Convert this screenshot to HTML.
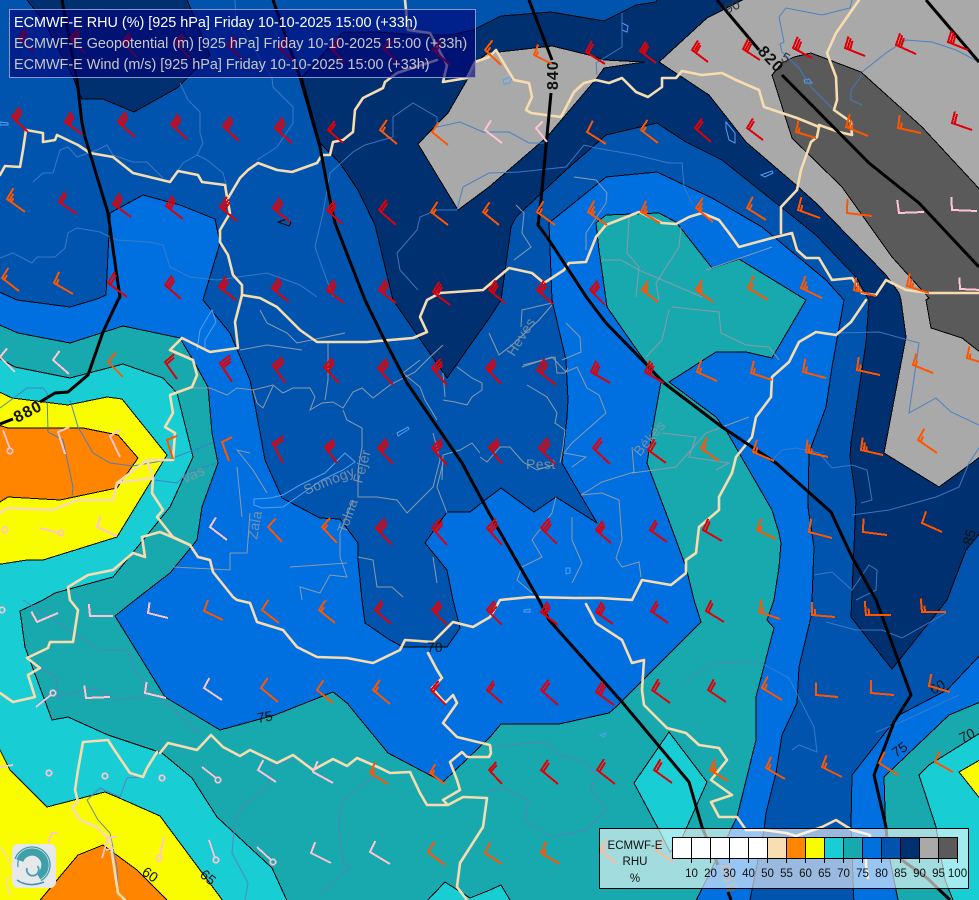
<!DOCTYPE html>
<html><head><meta charset="utf-8"><title>ECMWF-E RHU</title>
<style>html,body{margin:0;padding:0;background:#006fe0}svg{display:block}text{font-family:"Liberation Sans",sans-serif}</style></head>
<body>
<svg xmlns="http://www.w3.org/2000/svg" width="979" height="900" viewBox="0 0 979 900">
<defs>
<g id="r3" fill="none" stroke="#e00008" stroke-width="2"><path vector-effect="non-scaling-stroke" d="M0 0L-1 0L-1.05-.56M-.87 0L-.92-.52M-.75 0L-.8-.44"/></g>
<g id="r2" fill="none" stroke="#e00008" stroke-width="2"><path vector-effect="non-scaling-stroke" d="M0 0L-1 0L-1.05-.56M-.87 0L-.92-.48"/></g>
<g id="o3" fill="none" stroke="#ff5500" stroke-width="2"><path vector-effect="non-scaling-stroke" d="M0 0L-1 0L-1.05-.56M-.87 0L-.91-.36M-.76 0L-.79-.2"/></g>
<g id="o2" fill="none" stroke="#ff5500" stroke-width="2"><path vector-effect="non-scaling-stroke" d="M0 0L-1 0L-1.05-.56M-.87 0L-.9-.26"/></g>
<g id="o1" fill="none" stroke="#ff5500" stroke-width="2"><path vector-effect="non-scaling-stroke" d="M0 0L-1 0L-1.05-.56"/></g>
<g id="p1" fill="none" stroke="#ffc4d4" stroke-width="2"><path vector-effect="non-scaling-stroke" d="M0 0L-1 0L-1.05-.52"/></g>
</defs>

<!-- colour fields -->
<rect x="0" y="0" width="979" height="900" fill="#006fe0"/>
<g stroke="#000" stroke-width="1" stroke-linejoin="round" shape-rendering="crispEdges">
<polygon fill="#0054ad" points="-5,-5 985,-5 985,650 947,690 899,715 852,775 851,826 854,905 749,905 764,830 766,813 776,773 782,735 797,703 799,667 811,617 812,600 814,547 808,507 809,453 826,407 832,367 844,300 826,280 762,227 712,198 657,172 606,177 549,223 552,300 566,360 568,400 567,417 562,463 570,477 597,523 556,497 534,512 501,488 489,497 470,512 447,512 425,543 447,570 453,600 460,628 447,647 403,647 390,640 365,623 362,600 358,560 358,543 340,519 320,518 282,498 265,460 255,405 250,380 230,333 203,300 220,243 215,219 180,205 143,195 110,213 106,295 97,299 70,307 17,300 -5,290"/>
<polygon fill="#003070" points="23,-5 43,20 73,77 80,95 82,99 103,99 134,112 177,88 210,55 185,-5"/>
<polygon fill="#003070" points="302,77 343,32 377,32 417,35 450,35 473,30 489,22 501,16 551,12 604,21 636,5 656,2 660,-5 985,-5 985,527 966,550 947,600 892,669 851,617 856,500 850,457 851,443 866,343 869,300 856,277 816,235 776,203 722,160 686,142 657,123 606,135 566,170 516,217 511,227 501,300 490,317 447,378 393,300 375,225 358,190 340,163 320,143"/>
<polygon fill="#a9a9a9" points="752,-5 985,-5 985,453 972,463 939,487 884,453 906,337 901,300 899,293 886,275 816,203 796,185 746,142 709,95 659,62 707,18"/>
<polygon fill="#a9a9a9" points="552,46 589,55 604,60 644,62 604,68 597,78 547,137 489,187 458,210 418,144 448,113 467,80 475,63 489,52 499,52"/>
<polygon fill="#5a5a5a" points="772,75 782,63 794,57 811,53 861,72 922,127 985,195 985,356 962,338 931,328 926,300 929,298 892,257 842,187 792,138"/>
<polygon fill="#18a9ae" points="-5,323 18,333 70,343 123,326 180,338 197,367 208,387 212,433 218,463 202,507 197,540 170,573 135,600 115,616 165,697 220,730 275,715 333,692 347,703 388,753 443,782 490,737 501,724 559,724 609,713 616,707 701,622 694,600 686,567 666,513 647,463 652,432 661,382 639,353 607,307 599,250 596,223 606,215 659,213 676,222 712,268 739,259 806,300 772,358 746,352 716,352 669,382 716,417 727,432 772,510 779,533 781,543 779,567 774,600 767,620 774,628 756,697 756,740 737,817 694,905 -5,905"/>
<polygon fill="#18a9ae" points="884,777 949,715 985,700 985,905 899,905 886,840"/>
<polygon fill="#18cdd4" points="-5,356 15,367 70,378 123,364 163,378 177,393 193,457 170,507 113,577 55,593 43,600 20,611 25,647 52,720 68,717 108,735 162,753 192,778 217,817 272,868 289,905 -5,905"/>
<polygon fill="#18cdd4" points="669,732 707,782 682,838 670,852 659,830 634,783"/>
<polygon fill="#18cdd4" points="423,905 445,882 470,898 490,890 501,885 513,905"/>
<polygon fill="#18cdd4" points="919,775 929,765 985,730 985,905 955,905 945,880 936,827"/>
<polygon fill="#fafc00" points="959,772 985,757 985,805"/>
<polygon fill="#fafc00" points="-5,390 12,398 68,405 107,397 122,399 167,455 117,537 43,560 27,560 -5,565"/>
<polygon fill="#fafc00" points="-5,740 10,770 47,807 105,792 117,797 160,816 226,905 -5,905"/>
<polygon fill="#ff8400" points="-5,424 8,428 83,428 118,435 138,458 117,488 60,500 8,497 -5,505"/>
<polygon fill="#ff8400" points="36,905 78,855 103,845 137,870 172,905"/>
</g>

<!-- lakes -->
<g fill="none" stroke="#55a0f0" stroke-width="1">
<path d="M254 499L270 498 283 495 300 485 325 473 345 453 355 462 343 470 322 480 300 495 283 507 262 508 254 505Z"/>
<path d="M197 350L200 330 212 310 216 322 205 340 205 350"/>
<path d="M726 122L735 133 735 143 729 140 726 128Z"/><path d="M761 175L772 171 773 173 765 177Z"/>
<path d="M622 23L628 26 627 32 622 30Z"/><path d="M503 80L512 76 510 83 504 84Z"/><path d="M397 433L408 427 409 429 398 436Z"/>
<path d="M0 122L8 123 8 125 0 125Z"/><path d="M524 610L530 609 530 612 524 612Z"/><path d="M600 735L606 733 604 737Z"/><path d="M566 568L570 568 570 573 566 574Z"/><path d="M804 80L809 79 812 83 805 83Z"/>
</g>
<path d="M278 222L287 219 291 223 289 226Z" fill="none" stroke="#000"/>

<!-- rivers -->
<g fill="none" stroke="#3f7dc8" stroke-width="1" opacity=".9">
<path d="M235 0L236 20 272 78 273 87 293 107 293 123 277 147 257 160"/>
<path d="M180 83L188 100 200 112 200 133 203 143 197 155 207 160 223 173 227 187M197 155L183 163 172 180"/>
<path d="M33 182L43 173 53 173 60 150 68 147 77 157 97 150 107 145 113 155 133 162 147 162 163 178"/>
<path d="M0 258L13 253 32 263 37 257 55 257 65 248 68 233 77 228 100 232 117 240 150 242 163 245 170 267 190 277 217 280 267 273 300 285 317 297"/>
<path d="M393 137L365 145 353 152 330 173 323 213 315 247 322 267 333 297"/>
<path d="M393 137L393 117 413 103 437 117 437 127 460 122 483 132 509 132 529 143 544 143"/>
<path d="M397 253L417 230 420 217 437 210 457 210 463 187 489 173 519 172 566 167 584 145 596 148 636 155 669 163 682 163 684 187 692 203"/>
<path d="M397 253L400 270 418 290"/>
<path d="M622 13L622 47 596 63 597 75"/>
<path d="M852 0L850 8 822 15 786 8 779 17 784 42 780 44 782 52 799 68 811 87 832 108 850 120"/>
<path d="M862 72L886 53 906 40 932 42 956 50 979 62"/>
<path d="M862 75L851 90 851 100 862 105"/>
<path d="M852 515L889 510 936 497 959 487 969 463 979 448"/>
<path d="M772 460L782 450 796 448 819 453 832 468 852 465 867 470 872 500 861 503"/>
<path d="M836 333L879 332 919 343 909 413 936 398 951 412 979 425"/>
<path d="M814 575L832 572 852 590 869 565 877 570 876 590 856 600"/>
<path d="M761 663L789 678 814 727 817 752 799 745 792 750"/>
<path d="M826 622L856 630 882 630 902 638 946 613"/>
<path d="M876 732L899 723 959 695"/>
<path d="M0 408L15 397 27 388 43 388 47 393 48 432 63 440 73 487 72 497"/>
<path d="M70 400L78 427 93 453 110 463 133 466 167 460 213 443"/>
<path d="M155 480L177 483 187 473 217 463"/>
<g stroke="#5a80b8">
<path d="M489 747L529 743 546 742 559 755 586 762 596 775 591 790 606 810"/>
<path d="M489 792L502 787 529 800 524 820 552 837 586 830 606 810"/>
<path d="M686 680L716 663 742 662 761 663"/>
<path d="M23 600L50 617 73 633 100 650 127 650 137 673 153 693 177 713 200 733"/>
<path d="M40 668L57 677 57 697 93 688 117 700 133 698 147 697"/>
<path d="M87 800L98 820 110 833 117 867 118 887M87 800L100 788 120 797 127 778 143 777"/>
<path d="M293 760L273 765 267 787 243 807 235 820 232 853 248 883 245 900"/>
<path d="M373 777L343 800 338 823 343 863 350 867 343 873 320 893"/>
</g>
</g>
<g fill="none" stroke="#8d99a8" stroke-width="1">
<path d="M193 388L210 388 227 395 237 388 253 390 273 385 283 393 293 388 310 388 315 397 310 410 322 403 333 402 343 408 353 392 362 388 373 398 390 385 415 372 430 357 443 345"/>
<path d="M328 343L328 380 325 400"/>
<path d="M343 410L347 420 362 428 362 447 358 470 358 497 377 497 397 500 407 513 433 487 440 460 433 433"/>
<path d="M353 500L340 533 340 557 347 577 330 575 320 593 300 587 302 600"/>
<path d="M358 557L373 560 377 587 392 587 403 597"/>
<path d="M447 513L437 487 443 463M433 557L437 583"/>
<path d="M237 467L242 517M250 453L237 450 253 470 267 493"/>
<path d="M230 553L247 553 250 513M290 567L347 563M173 567L230 570 230 553"/>
<path d="M260 310L267 323 287 333 297 343 345 333M240 350L267 345 302 350M253 390L257 403 263 408 273 386"/>
<path d="M489 333L499 355 512 345 539 320 552 305M521 327L522 310 552 303"/>
<path d="M566 323L580 337 581 352 562 360"/>
<path d="M482 390L472 397 467 405 455 402 443 400M457 367L472 378 482 383 482 390M443 373L445 397"/>
<path d="M523 365L555 357 557 373 565 373 568 368M527 385L547 397 557 413 555 423 565 430 563 447 560 463"/>
<path d="M480 453L472 443 460 450 443 455 442 480M480 457L487 462 500 447 510 447 523 462 537 470 553 465"/>
<path d="M420 360L403 373 420 387 425 400 437 420"/>
<path d="M522 367L552 357 566 372 577 367 587 388 599 395 606 413 572 443 564 453 586 457 572 467"/>
<path d="M632 447L634 472 602 482 581 495 602 493 619 500 622 540 616 558 622 567 639 562 641 577"/>
<path d="M556 497L552 513 532 540 542 557 522 567 517 580 532 593"/>
<path d="M572 517L572 540 582 563 572 583"/>
<path d="M662 433L696 437 689 457 729 463 716 470M632 473L676 467 706 433 749 417"/>
<path d="M672 307L719 312 721 333 746 345 769 347 779 360"/>
<path d="M669 310L662 340 646 357"/>
<path d="M629 217L627 253 639 267 636 297M681 227L679 247 656 283 659 300M706 270L772 247"/>
<path d="M602 260L621 260 639 270 702 297"/>
<path d="M574 177L596 180 607 193 606 203 586 233 586 250"/>
<path d="M516 205L524 213 522 233 531 247 514 260"/>
</g>

<!-- county / river labels -->
<g fill="#8d98a4" font-size="14" letter-spacing=".4" opacity=".85">
<text transform="translate(184 484) rotate(-25)">Vas</text>
<text transform="translate(257 540) rotate(-80)">Zala</text>
<text transform="translate(306 495) rotate(-22)">Somogy</text>
<text transform="translate(346 534) rotate(-70)">Tolna</text>
<text transform="translate(362 484) rotate(-75)">Fejér</text>
<text transform="translate(526 469)">Pest</text>
<text transform="translate(640 457) rotate(-50)">Békés</text>
<text transform="translate(514 357) rotate(-58)">Heves</text>
</g>

<!-- national borders -->
<g fill="none" stroke="#f7dcb0" stroke-width="2.6" stroke-linejoin="round" stroke-linecap="round">
<path d="M0 175L5 166 20 167 23 150 26 130 43 133 43 142 55 140 57 135 78 145 90 153 113 157 133 173 170 182 178 171 198 175 202 182 225 185 227 197 230 213 220 230 220 242 228 255 233 275 242 285 242 295 235 322 238 348 210 352 182 338 170 350 193 360 197 375 192 387 170 395 173 413 165 427 175 433 173 460 147 460 117 483 113 500 77 500 53 510 7 508 0 513"/>
<path d="M117 483L153 478"/>
<path d="M242 295L260 298 277 307 300 330 317 342 367 342 413 338 427 332 420 317 427 300 440 293 483 290 509 268 532 273 544 283 564 270 569 263 586 262 596 237 606 225 639 212 662 223 676 224 689 217 702 213 719 220 729 233 739 247 772 238 792 233 797 250 806 258 819 258 832 280 852 278 862 293 876 295 886 280 906 290 929 293 979 293"/>
<path d="M781 233L781 207 797 190 801 170 811 142 817 137 819 127 797 118 782 113 764 107 759 90 736 80 722 73 702 75 682 71 676 78 662 78 662 87 648 97 636 92 622 78 609 83 596 80 584 83 574 92 561 117 531 113 526 110 532 97 529 83 514 80 506 67 496 50 489 57 475 62 467 78 443 82 447 65 430 33 408 30 405 0"/>
<path d="M437 60L397 73 385 82 383 88 363 98 355 110 353 132 343 140 333 142 330 155 322 155 317 163 292 172 277 170 258 163 248 170 240 178 227 200"/>
<path d="M859 0L836 33 827 53 836 77 837 100 834 110 851 122 852 135 839 132 819 125"/>
<path d="M866 300L851 322 836 335 816 332 799 342 789 362 772 377 771 397 756 417 752 437 736 457 732 473 719 497 719 510 699 527 696 553 686 560 686 573 671 585 642 580 632 600 600 598 575 598 530 597 500 600 490 617 473 627 453 622 433 642 405 640 400 650 373 663 347 658 317 657 297 647 283 630 257 622 250 603 237 600 233 597 213 572 210 560 198 557 190 545 173 537 157 517 163 510 152 493 153 478 147 460"/>
<path d="M70 600L68 587 88 575 113 570 133 553 145 557 142 537 160 532 172 537 190 545"/>
<path d="M70 600L78 610 73 642 50 642 48 648 27 658 40 668 28 675 35 697 13 702 0 693"/>
<path d="M586 604L596 623 622 640 632 663 644 660 642 690 644 705 667 728 686 733 699 745 719 748 727 760 711 780 732 795 711 802 719 817 737 817 746 830 764 830 786 833 796 836 822 827 836 820 852 830 870 835 866 850 866 865 868 878"/>
<path d="M428 653L437 670 442 678 432 688 445 703 453 695 457 703 443 723 457 737 490 745 491 753 489 757 467 757 462 752 450 762 457 780 460 790 443 800 448 805 463 797 487 798 483 827 460 863 457 887 467 900"/>
<path d="M160 753L168 743 197 750 211 735 223 747 240 756 250 750 277 763 293 755 313 770 333 759 347 766 357 758 380 768 390 773 410 772 420 793 427 805 447 805"/>
<path d="M157 752L147 768 143 777 130 773 113 748 108 740 83 742 78 770 75 790 78 802 72 807 80 820 97 827 110 840 118 893 125 900"/>
<path d="M0 847L8 858 14 874 6 880 10 895" stroke="#f7dcb0" stroke-width="1.5"/>
</g>

<!-- geopotential contours -->
<g fill="none" stroke="#000" stroke-width="3" stroke-linejoin="round">
<path d="M62 0L77 80 82 123 85 137 108 213 117 277 120 297 118 300 103 332 88 375 68 392 55 393 40 402"/>
<path d="M13 419L0 424"/>
<path d="M273 0L300 77 320 147 330 200 335 223 365 300 383 337 407 383 462 463 489 513 539 600 549 620 622 702 689 782 702 827 718 865"/>
<path d="M728 892L731 900"/>
<path d="M529 0L552 60"/><path d="M551 93L541 200 538 225 547 237 587 298 606 323 642 360 664 383 722 427 776 463 831 512 852 557 876 600 911 695 894 722 874 775 886 827 888 850 927 878 950 900"/>
<path d="M717 0L759 50"/>
<path d="M782 75L869 163 919 203 979 267"/>
<path d="M926 0L979 62"/>
</g>
<g font-weight="bold" font-size="16" fill="#111" letter-spacing="1">
<text transform="translate(17 423) rotate(-27)">880</text>
<text transform="translate(558 90) rotate(-90)">840</text>
<text transform="translate(757 52) rotate(47)">820</text>
<text transform="translate(719 866) rotate(72)" fill="#666">860</text>
</g>
<g font-size="14" fill="#111">
<text transform="translate(258 723) rotate(-10)">75</text>
<text transform="translate(141 874) rotate(35)">60</text>
<text transform="translate(199 876) rotate(40)">65</text>
<text transform="translate(427 652)">70</text>
<text transform="translate(972 546) rotate(-75)">85</text>
<text transform="translate(933 695) rotate(-30)">60</text>
<text transform="translate(896 758) rotate(-35)">75</text>
<text transform="translate(962 743) rotate(-25)">70</text>
<text transform="translate(780 60) rotate(30)" fill="#333">5</text>
<text transform="translate(727 14) rotate(-25)" fill="#333">90</text>
</g>

<!-- wind barbs -->
<g shape-rendering="crispEdges">
<use href="#r3" transform="matrix(16 14 -14 16 34 52)"/><use href="#r3" transform="matrix(15 15 -15 15 85 53)"/><use href="#r3" transform="matrix(15 15 -15 15 137 57)"/><use href="#r3" transform="matrix(15 15 -15 15 190 58)"/><use href="#r3" transform="matrix(16 15 -15 16 243 60)"/><use href="#r3" transform="matrix(17 15 -15 17 295 62)"/><use href="#r3" transform="matrix(15 16 -16 15 345 63)"/><use href="#r2" transform="matrix(17 17 -17 17 400 65)"/><use href="#r2" transform="matrix(17 15 -15 17 450 65)"/><use href="#o2" transform="matrix(16 15 -15 16 501 65)"/><use href="#o2" transform="matrix(18 9 -9 18 552 64)"/><use href="#r2" transform="matrix(19 12 -12 19 605 64)"/><use href="#r3" transform="matrix(16 12 -12 16 656 63)"/><use href="#r3" transform="matrix(16 12 -12 16 708 62)"/><use href="#r3" transform="matrix(17 11 -11 17 760 60)"/><use href="#r3" transform="matrix(19 10 -10 19 812 58)"/><use href="#r3" transform="matrix(20 8 -8 20 865 56)"/><use href="#r3" transform="matrix(20 9 -9 20 916 54)"/><use href="#r3" transform="matrix(20 8 -8 20 968 50)"/>

<use href="#r3" transform="matrix(16 15 -15 16 28 132)"/><use href="#r3" transform="matrix(17 12 -12 17 82 134)"/><use href="#r3" transform="matrix(17 15 -15 17 135 137)"/><use href="#r3" transform="matrix(16 15 -15 16 187 139)"/><use href="#r3" transform="matrix(16 15 -15 16 239 141)"/><use href="#r3" transform="matrix(17 15 -15 17 292 143)"/><use href="#r2" transform="matrix(15 13 -13 15 343 143)"/><use href="#o2" transform="matrix(17 14 -14 17 397 144)"/><use href="#o1" transform="matrix(16 13 -13 16 448 145)"/><use href="#p1" transform="matrix(17 13 -13 17 502 143)"/><use href="#p1" transform="matrix(11 14 -14 11 547 142)"/><use href="#o1" transform="matrix(19 12 -12 19 606 144)"/><use href="#o2" transform="matrix(17 13 -13 17 658 143)"/><use href="#r2" transform="matrix(16 14 -14 16 711 142)"/><use href="#r2" transform="matrix(16 12 -12 16 763 140)"/><use href="#o2" transform="matrix(20 6 -6 20 816 138)"/><use href="#o3" transform="matrix(22 9 -9 22 868 136)"/><use href="#o2" transform="matrix(23 5 -5 23 921 133)"/><use href="#r2" transform="matrix(20 7 -7 20 972 130)"/>

<use href="#o3" transform="matrix(18 13 -13 18 25 212)"/><use href="#r2" transform="matrix(18 12 -12 18 77 214)"/><use href="#r3" transform="matrix(18 13 -13 18 131 217)"/><use href="#r3" transform="matrix(17 13 -13 17 183 219)"/><use href="#r3" transform="matrix(17 14 -14 17 237 221)"/><use href="#r3" transform="matrix(17 14 -14 17 290 222)"/><use href="#r3" transform="matrix(15 14 -14 15 342 224)"/><use href="#r2" transform="matrix(17 15 -15 17 396 225)"/><use href="#o2" transform="matrix(17 13 -13 17 448 225)"/><use href="#o2" transform="matrix(16 13 -13 16 499 225)"/><use href="#o2" transform="matrix(18 13 -13 18 555 225)"/><use href="#o3" transform="matrix(19 13 -13 19 607 225)"/><use href="#o3" transform="matrix(19 11 -11 19 660 223)"/><use href="#o3" transform="matrix(17 14 -14 17 713 222)"/><use href="#o2" transform="matrix(19 12 -12 19 766 220)"/><use href="#o2" transform="matrix(22 8 -8 22 820 218)"/><use href="#o1" transform="matrix(25 3 -3 25 872 216)"/><use href="#p1" transform="matrix(25 -1 1 25 924 212)"/><use href="#p1" transform="matrix(25 1 -1 25 977 211)"/>

<use href="#o2" transform="matrix(17 13 -13 17 19 291)"/><use href="#o2" transform="matrix(19 11 -11 19 73 294)"/><use href="#r2" transform="matrix(19 14 -14 19 127 297)"/><use href="#r3" transform="matrix(16 14 -14 16 181 299)"/><use href="#r3" transform="matrix(17 13 -13 17 236 300)"/><use href="#r3" transform="matrix(17 14 -14 17 289 302)"/><use href="#r3" transform="matrix(17 13 -13 17 344 303)"/><use href="#r3" transform="matrix(17 13 -13 17 396 303)"/><use href="#r3" transform="matrix(17 13 -13 17 450 305)"/><use href="#r3" transform="matrix(16 13 -13 16 505 303)"/><use href="#r3" transform="matrix(16 14 -14 16 553 304)"/><use href="#r3" transform="matrix(15 15 -15 15 605 305)"/><use href="#o3" transform="matrix(16 12 -12 16 658 302)"/><use href="#o3" transform="matrix(17 12 -12 17 713 302)"/><use href="#o2" transform="matrix(20 12 -12 20 768 300)"/><use href="#o3" transform="matrix(21 10 -10 21 822 298)"/><use href="#o3" transform="matrix(22 6 -6 22 876 296)"/><use href="#o3" transform="matrix(22 7 -7 22 929 293)"/><use href="#p1" transform="matrix(22 1 -1 22 982 290)"/>

<use href="#p1" transform="matrix(15 15 -15 15 15 372)"/><use href="#p1" transform="matrix(16 14 -14 16 69 374)"/><use href="#o1" transform="matrix(15 15 -15 15 123 377)"/><use href="#r2" transform="matrix(12 17 -17 12 177 379)"/><use href="#r3" transform="matrix(12 19 -19 12 232 382)"/><use href="#r3" transform="matrix(12 18 -18 12 285 383)"/><use href="#r3" transform="matrix(15 16 -16 15 339 383)"/><use href="#r3" transform="matrix(15 17 -17 15 393 385)"/><use href="#r3" transform="matrix(15 17 -17 15 447 385)"/><use href="#r3" transform="matrix(15 16 -16 15 501 384)"/><use href="#r3" transform="matrix(19 15 -15 19 556 385)"/><use href="#r3" transform="matrix(19 11 -11 19 610 383)"/><use href="#r3" transform="matrix(19 11 -11 19 664 383)"/><use href="#o2" transform="matrix(20 9 -9 20 717 381)"/><use href="#o2" transform="matrix(21 7 -7 21 772 380)"/><use href="#o2" transform="matrix(23 6 -6 23 826 378)"/><use href="#o2" transform="matrix(23 5 -5 23 880 375)"/><use href="#o2" transform="matrix(20 8 -8 20 933 373)"/><use href="#o2" transform="matrix(20 6 -6 20 987 364)"/>

<use href="#p1" transform="matrix(10 21 -21 10 120 457)"/><use href="#p1" transform="matrix(7 22 -22 7 65 454)"/><use href="#o1" transform="matrix(6 19 -19 6 173 459)"/><use href="#o1" transform="matrix(7 19 -19 7 229 461)"/><use href="#r2" transform="matrix(10 20 -20 10 283 463)"/><use href="#r3" transform="matrix(12 16 -16 12 337 463)"/><use href="#r3" transform="matrix(15 16 -16 15 393 464)"/><use href="#r3" transform="matrix(15 17 -17 15 447 465)"/><use href="#r3" transform="matrix(13 17 -17 13 502 464)"/><use href="#r3" transform="matrix(17 17 -17 17 556 465)"/><use href="#r2" transform="matrix(17 16 -16 17 610 464)"/><use href="#r2" transform="matrix(18 13 -13 18 666 463)"/><use href="#o2" transform="matrix(18 13 -13 18 719 461)"/><use href="#o2" transform="matrix(21 9 -9 21 774 461)"/><use href="#o3" transform="matrix(22 5 -5 22 828 457)"/><use href="#o3" transform="matrix(22 5 -5 22 883 455)"/><use href="#o2" transform="matrix(19 13 -13 19 937 453)"/>

<use href="#p1" transform="matrix(20 9 -9 20 117 536)"/><use href="#p1" transform="matrix(17 13 -13 17 227 540)"/><use href="#o1" transform="matrix(14 15 -15 14 282 542)"/><use href="#o2" transform="matrix(15 16 -16 15 337 543)"/><use href="#r3" transform="matrix(16 17 -17 16 392 545)"/><use href="#r3" transform="matrix(15 17 -17 15 447 545)"/><use href="#r3" transform="matrix(15 17 -17 15 502 545)"/><use href="#r3" transform="matrix(16 16 -16 16 557 544)"/><use href="#r3" transform="matrix(15 13 -13 15 611 543)"/><use href="#r2" transform="matrix(17 12 -12 17 667 542)"/><use href="#r2" transform="matrix(19 11 -11 19 722 541)"/><use href="#o2" transform="matrix(19 9 -9 19 776 539)"/><use href="#o1" transform="matrix(23 6 -6 23 832 538)"/><use href="#o1" transform="matrix(24 3 -3 24 887 535)"/><use href="#o1" transform="matrix(20 9 -9 20 942 532)"/>

<use href="#p1" transform="matrix(21 -9 9 21 58 613)"/><use href="#p1" transform="matrix(23 0 0 23 113 616)"/><use href="#p1" transform="matrix(20 5 -5 20 168 618)"/><use href="#o1" transform="matrix(19 9 -9 19 223 620)"/><use href="#o1" transform="matrix(17 13 -13 17 279 623)"/><use href="#o2" transform="matrix(16 13 -13 16 335 623)"/><use href="#r2" transform="matrix(16 14 -14 16 391 624)"/><use href="#r3" transform="matrix(15 15 -15 15 447 625)"/><use href="#r3" transform="matrix(15 15 -15 15 502 625)"/><use href="#r3" transform="matrix(17 13 -13 17 558 625)"/><use href="#r3" transform="matrix(17 12 -12 17 613 624)"/><use href="#r2" transform="matrix(17 12 -12 17 668 623)"/><use href="#r2" transform="matrix(18 11 -11 18 724 622)"/><use href="#o2" transform="matrix(21 7 -7 21 780 619)"/><use href="#o2" transform="matrix(23 2 -2 23 835 617)"/><use href="#o2" transform="matrix(25 0 0 25 891 615)"/><use href="#o2" transform="matrix(24 0 0 24 946 612)"/>

<use href="#p1" transform="matrix(24 -1 1 24 110 697)"/><use href="#p1" transform="matrix(21 5 -5 21 166 698)"/><use href="#p1" transform="matrix(18 12 -12 18 222 700)"/><use href="#o1" transform="matrix(17 14 -14 17 278 702)"/><use href="#o1" transform="matrix(16 13 -13 16 333 703)"/><use href="#o2" transform="matrix(17 14 -14 17 390 704)"/><use href="#r2" transform="matrix(15 15 -15 15 446 705)"/><use href="#r2" transform="matrix(15 13 -13 15 502 703)"/><use href="#r2" transform="matrix(17 15 -15 17 558 705)"/><use href="#r3" transform="matrix(18 13 -13 18 614 705)"/><use href="#r2" transform="matrix(18 13 -13 18 670 703)"/><use href="#r2" transform="matrix(18 12 -12 18 726 702)"/><use href="#o2" transform="matrix(20 12 -12 20 782 700)"/><use href="#o1" transform="matrix(22 2 -2 22 838 697)"/><use href="#o1" transform="matrix(23 2 -2 23 894 695)"/><use href="#o1" transform="matrix(21 6 -6 21 950 692)"/>

<use href="#p1" transform="matrix(18 12 -12 18 276 782)"/><use href="#p1" transform="matrix(20 11 -11 20 333 783)"/><use href="#o2" transform="matrix(18 11 -11 18 388 784)"/><use href="#o2" transform="matrix(15 11 -11 15 445 784)"/><use href="#r2" transform="matrix(13 14 -14 13 502 784)"/><use href="#r2" transform="matrix(17 14 -14 17 558 784)"/><use href="#r2" transform="matrix(18 14 -14 18 615 784)"/><use href="#r2" transform="matrix(18 13 -13 18 672 783)"/><use href="#o3" transform="matrix(18 11 -11 18 728 781)"/><use href="#o2" transform="matrix(19 11 -11 19 785 779)"/><use href="#o2" transform="matrix(20 10 -10 20 842 777)"/><use href="#o1" transform="matrix(19 12 -12 19 898 775)"/><use href="#o1" transform="matrix(18 10 -10 18 953 772)"/>

<use href="#p1" transform="matrix(20 10 -10 20 331 863)"/><use href="#p1" transform="matrix(20 12 -12 20 390 864)"/><use href="#o1" transform="matrix(17 13 -13 17 445 865)"/><use href="#o1" transform="matrix(17 11 -11 17 502 864)"/><use href="#o2" transform="matrix(19 11 -11 19 560 864)"/><use href="#o2" transform="matrix(16 13 -13 16 616 863)"/><use href="#o1" transform="matrix(17 12 -12 17 673 862)"/>

<!-- calm markers -->
<g fill="none" stroke="#ffc4d4" stroke-width="1.8">
<path d="M3 430L10 449"/><circle cx="10" cy="451" r="2.7"/>
<path d="M40 528L59 533"/><circle cx="61" cy="533" r="2.7"/>
<circle cx="5" cy="530" r="2.7"/><circle cx="2" cy="610" r="2.7"/>
<path d="M36 707L51 695"/><circle cx="53" cy="693" r="2.7"/>
<circle cx="49" cy="773" r="2.7"/><circle cx="105" cy="776" r="2.7"/><circle cx="162" cy="778" r="2.7"/>
<path d="M202 767L216 778"/><circle cx="218" cy="780" r="2.7"/>
<path d="M164 837L160 856"/><circle cx="159" cy="858" r="2.7"/>
<path d="M209 840L215 858"/><circle cx="216" cy="860" r="2.7"/>
<path d="M257 847L271 860"/><circle cx="273" cy="862" r="2.7"/>
<path d="M0 767L13 765M48 843L52 833 57 833M102 858L108 838 116 837M106 850L114 848"/>
</g>
</g>

<!-- logo -->
<rect x="12" y="844" width="44" height="44" rx="6" fill="#e6e8ea"/>
<g fill="none" stroke="#3f9fa8" stroke-width="1.300">
<path d="M22.6 861.6A10 10 0 1 1 37 873.7"/><path d="M20.7 860.9A12 12 0 1 1 38 875.4"/><path d="M18.8 860.2A14 14 0 1 1 39 877.1"/><path d="M17 859.6A16 16 0 1 1 40 878.9"/><path d="M15.1 858.9A18 18 0 1 1 41 880.6"/><path d="M21.7 861.2A11 11 0 1 1 37.500 874.500"/><path d="M19.700 860.500A13 13 0 1 1 38.500 876.300"/><path d="M17.900 859.900A15 15 0 1 1 39.500 878"/>
<path d="M18 867A17 17 0 0 1 20 856" stroke="#4a9ec0"/>
</g>
<path d="M27 868A6 6 0 1 0 37.500 866" fill="none" stroke="#4aa0b4" stroke-width="1.800"/>
<path d="M17 880Q28 888 44 882" fill="none" stroke="#3f8fc0" stroke-width="1.500"/>

<!-- top legend -->
<rect x="9.500" y="9.500" width="466" height="68" fill="#000078" fill-opacity=".62" stroke="#8a95c8" stroke-width="1"/>
<text x="14" y="27" font-size="14.400" fill="#fff">ECMWF-E RHU (%) [925 hPa] Friday 10-10-2025 15:00 (+33h)</text>
<text x="14" y="48" font-size="14.400" fill="#c8c8c8">ECMWF-E Geopotential (m) [925 hPa] Friday 10-10-2025 15:00 (+33h)</text>
<text x="14" y="69" font-size="14.400" fill="#c8c8c8">ECMWF-E Wind (m/s) [925 hPa] Friday 10-10-2025 15:00 (+33h)</text>

<!-- colour bar legend -->
<rect x="599.500" y="828.500" width="369" height="60" fill="#fff" fill-opacity=".6" stroke="#000" stroke-width="1"/>
<g shape-rendering="crispEdges" stroke="#000" stroke-width="1">
<rect x="672.500" y="837.500" width="19" height="21" fill="#fff"/><rect x="691.500" y="837.500" width="19" height="21" fill="#fff"/><rect x="710.500" y="837.500" width="19" height="21" fill="#fff"/><rect x="729.500" y="837.500" width="19" height="21" fill="#fff"/><rect x="748.500" y="837.500" width="19" height="21" fill="#fff"/>
<rect x="767.500" y="837.500" width="19" height="21" fill="#f8deb0"/><rect x="786.500" y="837.500" width="19" height="21" fill="#ff8400"/><rect x="805.500" y="837.500" width="19" height="21" fill="#fafc00"/><rect x="824.500" y="837.500" width="19" height="21" fill="#18cdd4"/><rect x="843.500" y="837.500" width="19" height="21" fill="#18a9ae"/><rect x="862.500" y="837.500" width="19" height="21" fill="#006fe0"/><rect x="881.500" y="837.500" width="19" height="21" fill="#0054ad"/><rect x="900.500" y="837.500" width="19" height="21" fill="#003070"/><rect x="919.500" y="837.500" width="19" height="21" fill="#a9a9a9"/><rect x="938.500" y="837.500" width="19" height="21" fill="#5a5a5a"/>
<path d="M691.500 858V863M710.500 858V863M729.500 858V863M748.500 858V863M767.500 858V863M786.500 858V863M805.500 858V863M824.500 858V863M843.500 858V863M862.500 858V863M881.500 858V863M900.500 858V863M919.500 858V863M938.500 858V863M957.500 858V863" fill="none"/>
</g>
<g font-size="11.500" fill="#111" text-anchor="middle">
<text x="635" y="849">ECMWF-E</text>
<text x="635" y="865">RHU</text>
<text x="635" y="882">%</text>
<text x="691.500" y="877">10</text><text x="710.500" y="877">20</text><text x="729.500" y="877">30</text><text x="748.500" y="877">40</text><text x="767.500" y="877">50</text><text x="786.500" y="877">55</text><text x="805.500" y="877">60</text><text x="824.500" y="877">65</text><text x="843.500" y="877">70</text><text x="862.500" y="877">75</text><text x="881.500" y="877">80</text><text x="900.500" y="877">85</text><text x="919.500" y="877">90</text><text x="938.500" y="877">95</text><text x="957.500" y="877">100</text>
</g>
</svg>
</body></html>
